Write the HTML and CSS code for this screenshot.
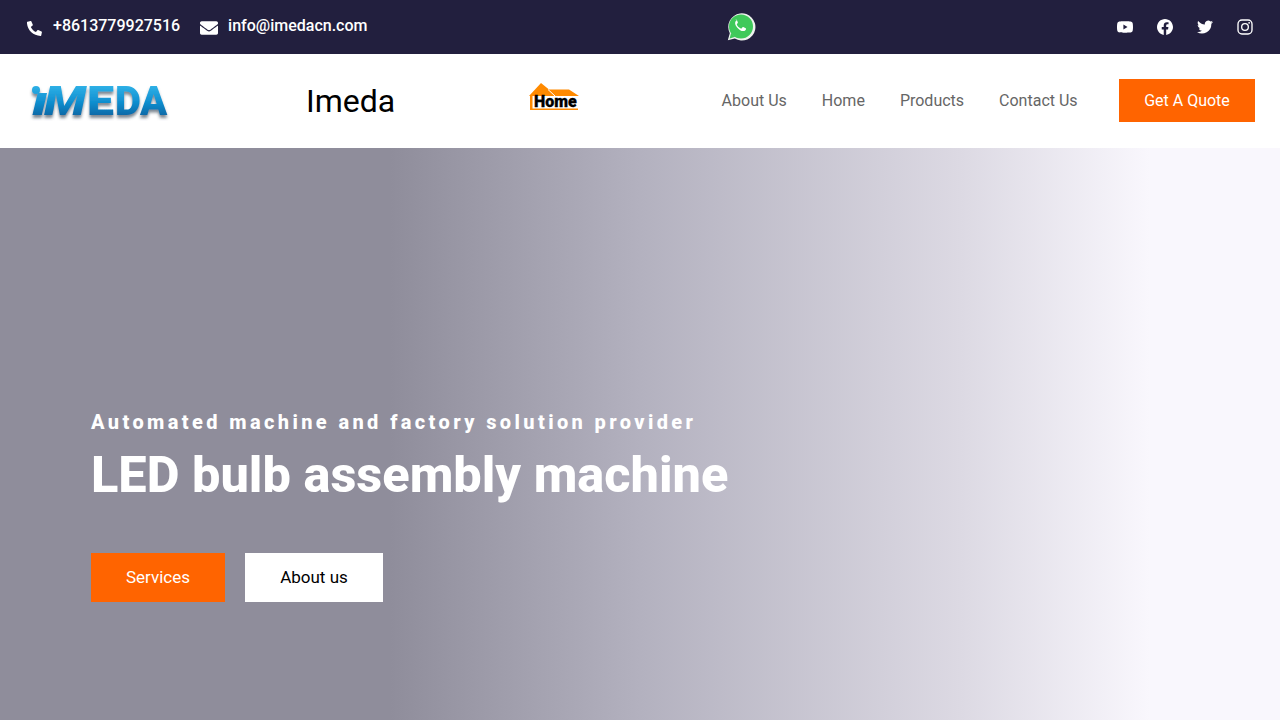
FILE: index.html
```html
<!DOCTYPE html>
<html lang="en">
<head>
    <meta charset="UTF-8">
    <meta name="viewport" content="width=device-width, initial-scale=1.0">
    <title>Imeda</title>
    <link rel="stylesheet" href="styles.css">
</head>
<body>
    <div class="topbar">
        <div class="contact">
            <a class="contact-item phone" href="#">
                <svg class="contact-icon" viewBox="0 0 512 512"><path d="M493 24 389 0c-11-3-23 3-27 14l-48 112c-4 10-1 21 7 28l61 50c-36 76-98 139-175 175l-50-61c-7-8-18-11-28-7L17 359c-11 5-17 16-14 28l24 104c2 11 12 19 23 19 256 0 464-207 464-464 0-11-8-21-21-22z" transform="matrix(-1 0 0 1 512 0)"/></svg>
                <span>+8613779927516</span>
            </a>
            <a class="contact-item" href="#">
                <svg class="contact-icon mail" viewBox="0 0 512 512"><path d="M502 191c4-3 10 0 10 5v204c0 27-21 48-48 48H48c-27 0-48-21-48-48V196c0-5 6-8 10-5 22 17 52 39 154 113 21 15 57 48 92 48s72-33 92-48c102-74 132-96 154-113zM256 320c23 0 57-29 73-41 133-97 143-105 174-129 6-5 9-12 9-19v-19c0-27-21-48-48-48H48C21 64 0 85 0 112v19c0 7 3 14 9 19 31 24 41 32 174 129 16 12 50 41 73 41z"/></svg>
                <span>info@imedacn.com</span>
            </a>
        </div>
        <a class="whatsapp" href="#">
            <svg viewBox="0 0 30 30" width="30" height="30">
                <path d="M1.800 28.300l2-7A13.600 13.600 0 1 1 8.800 26.600z" fill="#eef2ee"/>
                <circle cx="15" cy="14.500" r="12" fill="#3fc95a"/>
                <path d="M3.600 26.400l1.500-5.400 4.200 3.700z" fill="#3fc95a"/>
                <path d="M11.300 8.300c-.6 0-1.300.3-1.800 1.200-.8 1.600-.4 3.700 1.600 6 2.200 2.600 4.500 3.800 6.400 3.600 1.200-.1 2.200-.8 2.500-1.900.1-.5 0-.8-.3-.9l-2.400-1.200c-.3-.1-.6 0-.8.200l-.9 1.100c-.2.200-.5.300-.8.100-1.800-.9-3.100-2.200-3.900-3.800-.1-.3-.1-.5.100-.7l.7-.9c.2-.2.200-.5.100-.8l-.9-2.300c-.2-.4-.5-.6-1.600-.7z" fill="#fff"/>
            </svg>
        </a>
        <div class="social">
            <a href="#"><svg viewBox="0 0 24 24"><path d="M23.500 6.200a3 3 0 0 0-2.100-2.100C19.500 3.500 12 3.500 12 3.500s-7.500 0-9.400.6A3 3 0 0 0 .5 6.200C0 8.100 0 12 0 12s0 3.900.5 5.800a3 3 0 0 0 2.100 2.100c1.900.6 9.400.6 9.400.6s7.500 0 9.400-.6a3 3 0 0 0 2.100-2.100c.5-1.900.5-5.800.5-5.800s0-3.900-.5-5.800zM9.600 15.600V8.400l6.200 3.600z"/></svg></a>
            <a href="#"><svg viewBox="0 0 24 24"><path d="M24 12.100C24 5.400 18.600 0 12 0S0 5.400 0 12.100c0 6 4.400 11 10.100 11.900v-8.400h-3v-3.500h3V9.400c0-3 1.800-4.700 4.500-4.700 1.300 0 2.700.2 2.700.2v3h-1.500c-1.500 0-2 .9-2 1.900v2.300h3.300l-.5 3.500h-2.800V24C19.600 23.100 24 18.100 24 12.100z"/></svg></a>
            <a href="#"><svg viewBox="0 0 24 24"><path d="M24 4.600c-.9.400-1.800.7-2.800.8 1-.6 1.800-1.600 2.200-2.700-1 .6-2 1-3.100 1.200a4.900 4.900 0 0 0-8.400 4.500C7.700 8.100 4.100 6.100 1.700 3.100 .4 5.300 1 8.200 3.200 9.700c-.8 0-1.600-.2-2.200-.6 0 2.300 1.600 4.400 4 4.900-.7.200-1.500.2-2.200.1.600 2 2.500 3.400 4.600 3.400A9.900 9.900 0 0 1 0 19.500 14 14 0 0 0 21.500 7.100c1-.7 1.800-1.500 2.500-2.500z"/></svg></a>
            <a href="#"><svg class="insta" viewBox="0 0 24 24"><rect x="1.500" y="1.500" width="21" height="21" rx="6"/><circle cx="12" cy="12" r="5"/><circle class="insta-dot" cx="18.200" cy="5.800" r="1.400"/></svg></a>
        </div>
    </div>

    <header class="navbar">
        <a class="logo" href="#">
            <svg viewBox="0 0 146 54" width="146" height="54">
                <defs>
                    <linearGradient id="logo-fill" gradientUnits="userSpaceOnUse" x1="0" y1="13" x2="0" y2="42">
                        <stop offset="0" stop-color="#2fb0e6"/>
                        <stop offset="0.55" stop-color="#0f8fd0"/>
                        <stop offset="1" stop-color="#0a6aa8"/>
                    </linearGradient>
                    <filter id="logo-shadow" x="-5%" y="-10%" width="110%" height="130%">
                        <feDropShadow dx="0" dy="3" stdDeviation="1.500" flood-color="#3a4a58" flood-opacity="0.65"/>
                    </filter>
                </defs>
                <g class="logo-text" fill="url(#logo-fill)" filter="url(#logo-shadow)">
                    <circle cx="7" cy="17" r="4"/>
                    <text class="logo-slant" x="3" y="42" textLength="16" lengthAdjust="spacingAndGlyphs">ı</text>
                    <text class="logo-slant" x="15" y="42" textLength="42" lengthAdjust="spacingAndGlyphs">M</text>
                    <text x="58" y="42" textLength="27" lengthAdjust="spacingAndGlyphs">E</text>
                    <text x="86" y="42">D</text>
                    <text x="111" y="42">A</text>
                </g>
            </svg>
        </a>
        <div class="brand">Imeda</div>
        <a class="home-badge" href="#">
            <svg viewBox="0 0 52 32" width="52" height="32">
                <path d="M1 15 13 2l8 6.500h20L51 15z" fill="#ff8a00"/>
                <path d="M20 8.500 27 15" stroke="#fff" stroke-width="1" fill="none"/>
                <path d="M2 15h2.500v12.500H50V29H2z" fill="#ff8a00"/>
                <text class="home-text" x="6" y="25.500">Home</text>
            </svg>
        </a>
        <nav class="nav-links">
            <a href="#">About Us</a>
            <a href="#">Home</a>
            <a href="#">Products</a>
            <a href="#">Contact Us</a>
        </nav>
        <a class="quote-btn" href="#">Get A Quote</a>
    </header>

    <section class="hero">
        <p class="hero-sub">Automated machine and factory solution provider</p>
        <h1 class="hero-title">LED bulb assembly machine</h1>
        <div class="hero-buttons">
            <a class="btn btn-orange" href="#">Services</a>
            <a class="btn btn-white" href="#">About us</a>
        </div>
    </section>
</body>
</html>
```
FILE: styles.css
```css
* {
    box-sizing: border-box;
}
html, body {
    height: 100%;
}
body {
    font-family: Roboto, "Liberation Sans", sans-serif;
    margin: 0;
    overflow: hidden;
    display: flex;
    flex-direction: column;
    background-color: #fff;
}
a {
    text-decoration: none;
    color: inherit;
}
svg {
    display: block;
}

/* top bar */
.topbar {
    height: 54px;
    background-color: #221f3e;
    color: #fff;
    display: grid;
    grid-template-columns: 701px auto 1fr;
    align-items: center;
    padding: 0 27px 0 25px;
}
.contact {
    display: flex;
    gap: 20px;
    font-size: 16px;
    font-weight: 500;
}
.contact-item {
    display: flex;
    align-items: flex-start;
    gap: 11px;
    margin-top: -1px;
}
.contact-icon {
    width: 15px;
    height: 15px;
    margin: 5px 0 0 2px;
    fill: #fff;
}
.contact-icon.mail {
    width: 18px;
    height: 18px;
    margin: 3px -1px 0 0;
}
.whatsapp {
    display: block;
}
.social {
    display: flex;
    justify-content: flex-end;
    gap: 24px;
}
.social svg {
    width: 16px;
    height: 16px;
    fill: #fff;
}
.insta {
    fill: none !important;
    stroke: #fff;
    stroke-width: 2;
}
.insta-dot {
    fill: #fff;
    stroke: none;
}

/* nav */
.navbar {
    height: 94px;
    display: flex;
    align-items: center;
    padding: 0 25px 2px 29px;
}
.logo {
    width: 277px;
}
.logo-text {
    font-family: Roboto, sans-serif;
    font-weight: 900;
    font-size: 40px;
}
.logo-slant {
    font-style: italic;
}
.brand {
    font-size: 32px;
    color: #000;
    width: 222px;
    padding-top: 2px;
}
.home-badge {
    display: block;
    margin-top: -6px;
}
.home-text {
    font-family: Roboto, sans-serif;
    font-weight: 900;
    font-size: 16px;
    fill: #000;
    stroke: #000;
    stroke-width: 0.3;
}
.nav-links {
    display: flex;
    gap: 35px;
    margin-left: auto;
    font-size: 16px;
    color: #666;
}
.quote-btn {
    margin-left: 41.400px;
    width: 136px;
    height: 43px;
    background-color: #ff6400;
    color: #fff;
    font-size: 16px;
    display: flex;
    align-items: center;
    justify-content: center;
}

/* hero */
.hero {
    flex: 1;
    padding: 259px 91px 0;
    color: #fff;
    background: linear-gradient(90deg, #8f8d9b 0, #8f8d9b 390px, #b3b1bf 640px, #dcd9e3 960px, #f9f7fd 1150px);
}
.hero-sub {
    margin: 0;
    font-size: 20px;
    font-weight: 800;
    letter-spacing: 3.390px;
    line-height: 30px;
}
.hero-title {
    margin: 8px 0 0;
    font-size: 50.500px;
    font-weight: 800;
    line-height: 60px;
}
.hero-buttons {
    display: flex;
    gap: 20px;
    margin-top: 48px;
}
.btn {
    height: 49px;
    padding-bottom: 2px;
    font-size: 17px;
    display: flex;
    align-items: center;
    justify-content: center;
}
.btn-orange {
    width: 134px;
    background-color: #ff6400;
    color: #fff;
}
.btn-white {
    width: 138px;
    background-color: #fff;
    color: #000;
}
```
